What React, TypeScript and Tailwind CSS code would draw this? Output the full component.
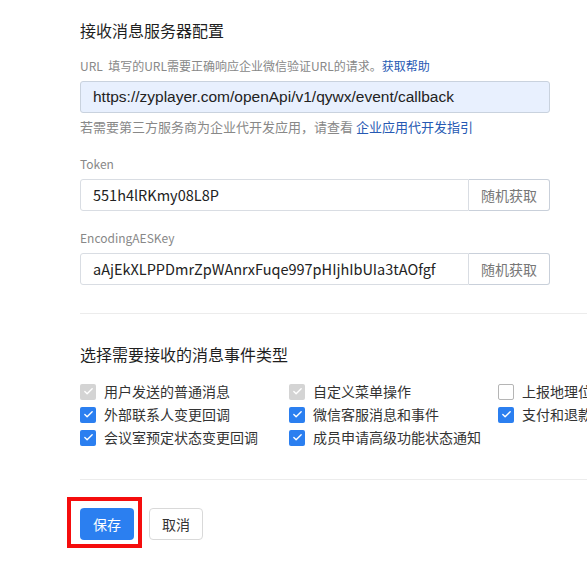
import { Check } from "lucide-react";

const font = {
  fontFamily: '"Noto Sans CJK SC", "Noto Sans", sans-serif',
};

type Item = { label: string; state: "disabled" | "checked" | "unchecked" };

const events: Item[] = [
  { label: "用户发送的普通消息", state: "disabled" },
  { label: "自定义菜单操作", state: "disabled" },
  { label: "上报地理位置", state: "unchecked" },
  { label: "外部联系人变更回调", state: "checked" },
  { label: "微信客服消息和事件", state: "checked" },
  { label: "支付和退款通知", state: "checked" },
  { label: "会议室预定状态变更回调", state: "checked" },
  { label: "成员申请高级功能状态通知", state: "checked" },
];

export default function App() {
  return (
    <div
      className="h-[569px] w-[587px] overflow-hidden bg-white text-[#333]"
      style={font}
    >
      <div className="w-[700px] pl-[80px]">
        <h2 className="mt-[19px] h-[22px] text-[16px] leading-[22px] font-normal text-[#1f1f1f]">
          接收消息服务器配置
        </h2>

        <p className="mt-[15px] h-[20px] text-[12px] leading-[20px] text-[#888]">
          URL&nbsp;&nbsp;填写的URL需要正确响应企业微信验证URL的请求。
          <a className="text-[#2659b3]">获取帮助</a>
        </p>
        <div className="mt-[5px] flex h-[32px] w-[470px] items-center rounded-[3px] border border-[#c9d2de] bg-[#e8f0fe] px-[12px] font-['Liberation_Sans',sans-serif] text-[15.5px] text-[#222]">
          https://zyplayer.com/openApi/v1/qywx/event/callback
        </div>
        <p className="mt-[4px] h-[20px] text-[13px] leading-[20px] text-[#888]">
          若需要第三方服务商为企业代开发应用，请查看{" "}
          <a className="text-[#2659b3]">企业应用代开发指引</a>
        </p>

        <Field className="mt-[17px]" label="Token" value="551h4lRKmy08L8P" />
        <Field
          className="mt-[17px]"
          label="EncodingAESKey"
          value="aAjEkXLPPDmrZpWAnrxFuqe997pHIjhIbUIa3tAOfgf"
        />

        <div className="mt-[28px] h-px bg-[#ececec]" />

        <h2 className="mt-[29px] h-[22px] text-[16px] leading-[22px] font-normal text-[#1f1f1f]">
          选择需要接收的消息事件类型
        </h2>

        <div className="mt-[15px] grid grid-cols-[209px_209px_209px]">
          {events.map((e) => (
            <label
              key={e.label}
              className="flex h-[23px] items-center gap-[8px] text-[14px] whitespace-nowrap"
            >
              <Box state={e.state} />
              <span>{e.label}</span>
            </label>
          ))}
        </div>

        <div className="mt-[30px] h-px bg-[#ececec]" />

        <div className="mt-[28px] flex items-center gap-[15px]">
          <span className="relative">
            <button className="h-[32px] w-[54px] rounded-[4px] bg-[#2b7ff0] text-[14px] text-white">
              保存
            </button>
            <span className="absolute -top-[11px] -left-[13px] h-[51px] w-[75px] border-[4px] border-[#f50d0d]" />
          </span>
          <button className="h-[32px] w-[54px] rounded-[4px] border border-[#d9d9d9] bg-white text-[14px] text-[#333]">
            取消
          </button>
        </div>
      </div>
    </div>
  );
}

function Field({
  label,
  value,
  className,
}: {
  label: string;
  value: string;
  className?: string;
}) {
  return (
    <div className={className}>
      <p className="h-[20px] text-[12px] leading-[20px] text-[#888]">{label}</p>
      <div className="mt-[5px] flex h-[32px] w-[470px]">
        <div className="flex flex-1 items-center rounded-l-[3px] border border-[#d9dde3] px-[12px] text-[14.5px] text-[#222]">
          {value}
        </div>
        <button className="w-[81px] rounded-r-[3px] border border-l-0 border-[#c9d0da] bg-white text-[14px] text-[#777]">
          随机获取
        </button>
      </div>
    </div>
  );
}

function Box({ state }: { state: Item["state"] }) {
  if (state === "unchecked") {
    return (
      <span className="h-[16px] w-[16px] shrink-0 rounded-[2px] border border-[#b5b5b5] bg-white" />
    );
  }
  return (
    <span
      className={
        state === "checked"
          ? "flex h-[16px] w-[16px] shrink-0 items-center justify-center rounded-[2px] bg-[#2b7ff0]"
          : "flex h-[16px] w-[16px] shrink-0 items-center justify-center rounded-[2px] bg-[#d4d4d4]"
      }
    >
      <Check size={11} strokeWidth={3} className="text-white" />
    </span>
  );
}
